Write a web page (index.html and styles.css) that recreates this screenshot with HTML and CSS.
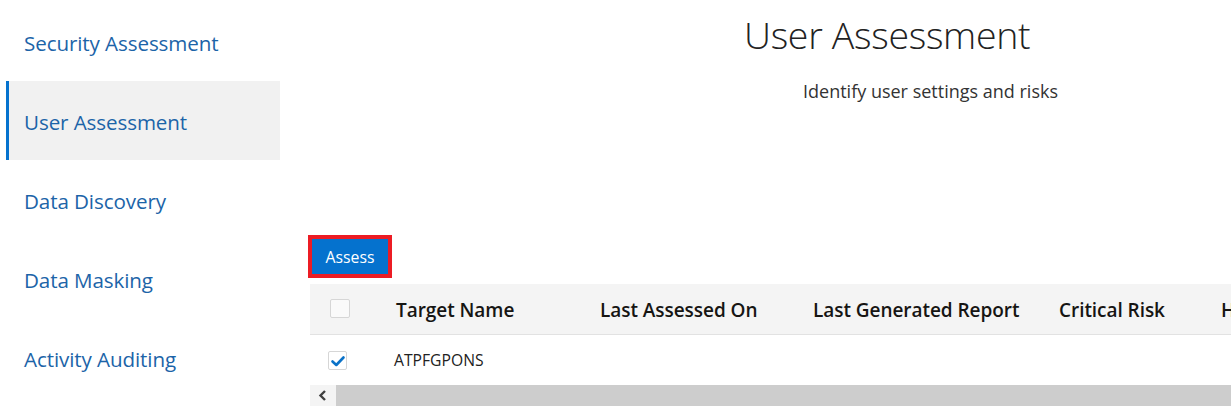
FILE: index.html
```html
<!DOCTYPE html>
<html>
<head>
<meta charset="utf-8">
<link rel="stylesheet" href="styles.css">
</head>
<body>
<div class="app">
  <nav class="sidebar">
    <a class="nav-item">Security Assessment</a>
    <a class="nav-item active">User Assessment</a>
    <a class="nav-item">Data Discovery</a>
    <a class="nav-item">Data Masking</a>
    <a class="nav-item">Activity Auditing</a>
  </nav>
  <main class="main">
    <header class="page-head">
      <h1 class="title">User Assessment</h1>
      <p class="subtitle">Identify user settings and risks</p>
    </header>
    <div class="toolbar">
      <div class="highlight"><button class="btn">Assess</button></div>
    </div>
    <div class="grid">
      <table class="table">
        <colgroup>
          <col class="c0"><col class="c1"><col class="c2"><col class="c3"><col class="c4"><col class="c5">
        </colgroup>
        <thead>
          <tr>
            <th class="cb-cell"><span class="cb"></span></th>
            <th>Target Name</th>
            <th>Last Assessed On</th>
            <th>Last Generated Report</th>
            <th>Critical Risk</th>
            <th>High Risk</th>
          </tr>
        </thead>
        <tbody>
          <tr>
            <td class="cb-cell"><span class="cb checked"><svg viewBox="0 0 20 20" width="20" height="20"><path d="M4.5 10.5 L8.3 14 L15.5 6.5" fill="none" stroke="#0a72c8" stroke-width="2.6" stroke-linecap="round" stroke-linejoin="round"/></svg></span></td>
            <td class="name">ATPFGPONS</td>
            <td></td><td></td><td></td><td></td>
          </tr>
        </tbody>
      </table>
      <div class="hscroll">
        <span class="arrow"><svg viewBox="0 0 26 21" width="26" height="21"><path d="M15 6 L10.5 10.5 L15 15" fill="none" stroke="#404040" stroke-width="2.4"/></svg></span>
        <span class="track"></span>
      </div>
    </div>
  </main>
</div>
</body>
</html>
```
FILE: styles.css
```css
* { box-sizing: border-box; }
html, body { margin: 0; padding: 0; background: #fff; }
body {
  font-family: "Open Sans", "Noto Sans", sans-serif;
  width: 1231px;
  height: 406px;
  overflow: hidden;
}
.app { display: flex; height: 406px; }
.sidebar {
  width: 280px;
  flex: none;
  padding: 2px 0 0 6px;
  display: flex;
  flex-direction: column;
}
.nav-item {
  height: 79px;
  display: flex;
  align-items: center;
  font-size: 20.6px;
  color: #1c64a8;
  border-left: 3px solid transparent;
  padding: 2px 0 0 15px;
  letter-spacing: -0.1px;
}
.nav-item.active {
  background: #f1f1f1;
  border-left-color: #0572ce;
}
.main {
  flex: 1;
  min-width: 0;
  overflow: hidden;
  padding-left: 30px;
  display: flex;
  flex-direction: column;
}
.page-head { height: 235px; display: flex; flex-direction: column; align-items: flex-start; }
.title {
  margin: 10px 0 0 434px;
  font-size: 37.5px;
  font-weight: 300;
  color: #222;
  line-height: 50px;
  letter-spacing: -0.3px;
}
.subtitle {
  margin: 19px 0 0 493px;
  font-size: 18px;
  color: #333;
  line-height: 24px;
}
.toolbar { height: 49px; }
.highlight {
  display: inline-block;
  border: 4px solid #ec1c24;
  margin-left: -2px;
}
.btn {
  display: block;
  width: 76px;
  height: 35px;
  border: 0;
  background: #0572ce;
  color: #fff;
  font-family: inherit;
  font-size: 15.8px;
  padding: 0;
}
.grid { width: 1400px; }
.table {
  border-collapse: collapse;
  table-layout: fixed;
  width: 1400px;
}
.c0 { width: 76px; }
.c1 { width: 204px; }
.c2 { width: 213px; }
.c3 { width: 246px; }
.c4 { width: 162px; }
.c5 { width: 499px; }
th {
  background: #f4f4f4;
  height: 50px;
  text-align: left;
  padding: 3px 10px 0;
  font-size: 19px;
  font-weight: 600;
  color: #161513;
  border-bottom: 1px solid #e2e2e2;
  white-space: nowrap;
  letter-spacing: -0.05px;
}
td {
  height: 51px;
  padding: 1px 8px 0;
  font-size: 15.7px;
  color: #222;
}
th.cb-cell { padding: 0 0 0 20px; }
td.cb-cell { padding-left: 18px; }
.cb {
  display: block;
  width: 20px;
  height: 19px;
  border: 1px solid #d6d6d6;
  border-radius: 2px;
  background: #fafafa;
}
.cb.checked { background: #fff; width: 19px; height: 19px; position: relative; }
.cb.checked svg { position: absolute; left: -1px; top: -1px; }
.hscroll { display: flex; height: 21px; }
.arrow { width: 26px; background: #f4f4f4; display: block; }
.arrow svg { display: block; }
.track { flex: 1; background: #cdcdcd; }
```
